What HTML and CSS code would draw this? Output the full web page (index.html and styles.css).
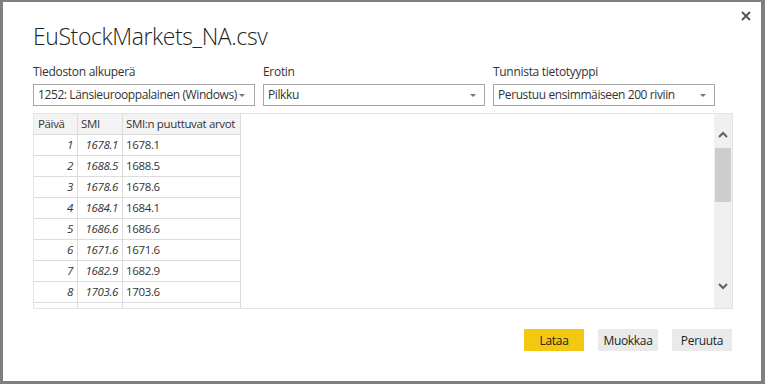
FILE: index.html
```html
<!DOCTYPE html>
<html lang="fi">
<head>
    <meta charset="UTF-8">
    <meta name="viewport" content="width=device-width, initial-scale=1.0">
    <title>EuStockMarkets_NA.csv</title>
    <link rel="stylesheet" href="styles.css">
</head>
<body>
    <div class="dialog">
        <button class="close" aria-label="Sulje">
            <svg width="10" height="10" viewBox="0 0 10 10"><path d="M1 1L9 9M9 1L1 9" stroke="#505050" stroke-width="1.8"/></svg>
        </button>

        <h1>EuStockMarkets_NA.csv</h1>

        <div class="fields">
            <div class="field">
                <label>Tiedoston alkuperä</label>
                <div class="select tight">1252: Länsieurooppalainen (Windows)<span class="caret"></span></div>
            </div>
            <div class="field">
                <label>Erotin</label>
                <div class="select">Pilkku<span class="caret"></span></div>
            </div>
            <div class="field">
                <label>Tunnista tietotyyppi</label>
                <div class="select">Perustuu ensimmäiseen 200 riviin<span class="caret"></span></div>
            </div>
        </div>

        <div class="preview">
            <div class="grid">
                <div class="cell head">Päivä</div>
                <div class="cell head">SMI</div>
                <div class="cell head">SMI:n puuttuvat arvot</div>

                <div class="cell num">1</div><div class="cell num">1678.1</div><div class="cell">1678.1</div>
                <div class="cell num">2</div><div class="cell num">1688.5</div><div class="cell">1688.5</div>
                <div class="cell num">3</div><div class="cell num">1678.6</div><div class="cell">1678.6</div>
                <div class="cell num">4</div><div class="cell num">1684.1</div><div class="cell">1684.1</div>
                <div class="cell num">5</div><div class="cell num">1686.6</div><div class="cell">1686.6</div>
                <div class="cell num">6</div><div class="cell num">1671.6</div><div class="cell">1671.6</div>
                <div class="cell num">7</div><div class="cell num">1682.9</div><div class="cell">1682.9</div>
                <div class="cell num">8</div><div class="cell num">1703.6</div><div class="cell">1703.6</div>
                <div class="cell num"></div><div class="cell num"></div><div class="cell"></div>
            </div>
            <div class="scrollbar">
                <div class="sb-up">
                    <svg width="10" height="7" viewBox="0 0 10 7"><path d="M1 6L5 2L9 6" fill="none" stroke="#606060" stroke-width="2"/></svg>
                </div>
                <div class="sb-thumb"></div>
                <div class="sb-track"></div>
                <div class="sb-down">
                    <svg width="10" height="7" viewBox="0 0 10 7"><path d="M1 1L5 5L9 1" fill="none" stroke="#606060" stroke-width="2"/></svg>
                </div>
            </div>
        </div>

        <div class="actions">
            <button class="btn primary">Lataa</button>
            <button class="btn">Muokkaa</button>
            <button class="btn">Peruuta</button>
        </div>
    </div>
</body>
</html>
```

FILE: styles.css
```css
body {
    margin: 0;
    font-family: "Open Sans", "Noto Sans", sans-serif;
    color: #333;
    background-color: #7f7f7f;
}
.dialog {
    position: relative;
    box-sizing: border-box;
    width: 765px;
    height: 384px;
    border-style: solid;
    border-color: #7f7f7f;
    border-width: 2px 4px 3px 3px;
    background-color: #fff;
    padding: 18px 28px 0 30px;
    display: flex;
    flex-direction: column;
}
.close {
    position: absolute;
    top: 9px;
    right: 10px;
    width: 10px;
    height: 10px;
    padding: 0;
    border: none;
    background: none;
    display: flex;
}
h1 {
    margin: 0;
    font-size: 23px;
    font-weight: 300;
    line-height: 32px;
    color: #252423;
    letter-spacing: -0.4px;
}
.fields {
    display: grid;
    grid-template-columns: 222px 222px 222px;
    column-gap: 8px;
    margin-top: 12px;
}
.field label {
    display: block;
    font-size: 12px;
    line-height: 16px;
    letter-spacing: -0.3px;
    margin-bottom: 4px;
}
.select {
    box-sizing: border-box;
    height: 22px;
    border: 1px solid #a6a6a6;
    padding: 0 0 0 4px;
    font-size: 12px;
    line-height: 20px;
    letter-spacing: -0.4px;
    display: flex;
    align-items: center;
    white-space: nowrap;
}
.caret {
    margin-left: auto;
    margin-right: 8px;
    width: 0;
    height: 0;
    border-left: 3px solid transparent;
    border-right: 3px solid transparent;
    border-top: 3px solid #777;
}
.select.tight .caret {
    margin-left: 2px;
}
.preview {
    box-sizing: border-box;
    height: 196px;
    margin-top: 7px;
    border: 1px solid #e3e3e3;
    display: flex;
    overflow: hidden;
}
.grid {
    display: grid;
    grid-template-columns: 44px 45px 118px;
    grid-auto-rows: 21px;
    align-content: start;
    font-size: 11.5px;
    letter-spacing: -0.35px;
}
.cell {
    box-sizing: border-box;
    border-right: 1px solid #dcdcdc;
    border-bottom: 1px solid #dcdcdc;
    line-height: 20px;
    padding: 0 3px;
    white-space: nowrap;
}
.cell.head {
    background-color: #f3f3f3;
    padding-left: 3px;
}
.cell.head:first-child {
    padding-left: 4px;
}
.cell.num {
    text-align: right;
    font-style: italic;
    padding-right: 4px;
}
.scrollbar {
    margin-left: auto;
    width: 18px;
    background-color: #f0f0f0;
    display: flex;
    flex-direction: column;
}
.sb-up {
    height: 34px;
    display: flex;
    justify-content: center;
    align-items: flex-start;
    padding-top: 17px;
    box-sizing: border-box;
}
.sb-thumb {
    height: 54px;
    margin: 0 1px;
    background-color: #cdcdcd;
}
.sb-track {
    flex: 1;
}
.sb-down {
    height: 30px;
    display: flex;
    justify-content: center;
    align-items: flex-start;
    padding-top: 5px;
    box-sizing: border-box;
}
.actions {
    display: flex;
    justify-content: flex-end;
    gap: 14px;
    margin-top: 20px;
    margin-right: 1px;
}
.btn {
    width: 60px;
    height: 22px;
    border: none;
    padding: 0;
    font-family: "Open Sans", "Noto Sans", sans-serif;
    font-size: 12px;
    letter-spacing: -0.3px;
    color: #252423;
    background-color: #eaeaea;
}
.btn.primary {
    background-color: #f2c811;
}
```
